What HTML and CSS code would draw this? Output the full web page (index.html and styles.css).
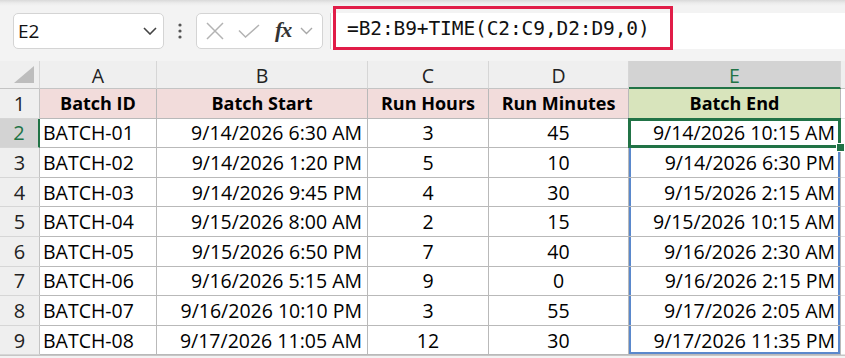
FILE: index.html
```html
<!DOCTYPE html>
<html lang="en">
<head>
  <meta charset="UTF-8">
  <meta name="viewport" content="width=device-width, initial-scale=1.0">
  <title>Batch End</title>
  <link rel="stylesheet" href="styles.css">
</head>
<body>
  <div class="toolbar">
    <div class="namebox">
      <span>E2</span>
      <svg class="chev" width="14" height="8" viewBox="0 0 14 8"><path d="M1 1 L7 7 L13 1" fill="none" stroke="#444" stroke-width="1.6"/></svg>
    </div>
    <div class="grip">
      <svg width="6" height="16" viewBox="0 0 6 16"><circle cx="3" cy="2" r="1.6" fill="#555"/><circle cx="3" cy="8" r="1.6" fill="#555"/><circle cx="3" cy="14" r="1.6" fill="#555"/></svg>
    </div>
    <div class="fxbox">
      <svg class="ico-x" width="18" height="18" viewBox="0 0 18 18"><path d="M1 1 L17 17 M17 1 L1 17" stroke="#b3b3b3" stroke-width="1.5"/></svg>
      <svg class="ico-ok" width="22" height="14" viewBox="0 0 22 14"><path d="M1 6.5 L7.5 13 L21 1" fill="none" stroke="#b3b3b3" stroke-width="1.5"/></svg>
      <span class="fx">fx</span>
      <svg class="chev-sm" width="13" height="8" viewBox="0 0 13 8"><path d="M1 1 L6.5 6.5 L12 1" fill="none" stroke="#a8a8a8" stroke-width="1.4"/></svg>
    </div>
    <div class="formula">
      <div class="formula-mark">=B2:B9+TIME(C2:C9,D2:D9,0)</div>
    </div>
  </div>

  <div class="sheet">
    <div class="h corner"><svg width="20" height="17" viewBox="0 0 20 17"><path d="M20 0 L20 17 L0 17 Z" fill="#bdbdbd"/></svg></div>
    <div class="h">A</div>
    <div class="h">B</div>
    <div class="h">C</div>
    <div class="h">D</div>
    <div class="h h-sel">E</div>
    <div class="h h-end"></div>

    <div class="r">1</div>
    <div class="c t pink">Batch ID</div>
    <div class="c t pink">Batch Start</div>
    <div class="c t pink">Run Hours</div>
    <div class="c t pink">Run Minutes</div>
    <div class="c t green">Batch End</div>
    <div class="c end"></div>

    <div class="r r-sel">2</div>
    <div class="c left">BATCH-01</div>
    <div class="c right">9/14/2026 6:30 AM</div>
    <div class="c">3</div>
    <div class="c">45</div>
    <div class="c right active">9/14/2026 10:15 AM<span class="handle"></span></div>
    <div class="c end"></div>

    <div class="r">3</div>
    <div class="c left">BATCH-02</div>
    <div class="c right">9/14/2026 1:20 PM</div>
    <div class="c">5</div>
    <div class="c">10</div>
    <div class="c right rng">9/14/2026 6:30 PM</div>
    <div class="c end"></div>

    <div class="r">4</div>
    <div class="c left">BATCH-03</div>
    <div class="c right">9/14/2026 9:45 PM</div>
    <div class="c">4</div>
    <div class="c">30</div>
    <div class="c right rng">9/15/2026 2:15 AM</div>
    <div class="c end"></div>

    <div class="r">5</div>
    <div class="c left">BATCH-04</div>
    <div class="c right">9/15/2026 8:00 AM</div>
    <div class="c">2</div>
    <div class="c">15</div>
    <div class="c right rng">9/15/2026 10:15 AM</div>
    <div class="c end"></div>

    <div class="r">6</div>
    <div class="c left">BATCH-05</div>
    <div class="c right">9/15/2026 6:50 PM</div>
    <div class="c">7</div>
    <div class="c">40</div>
    <div class="c right rng">9/16/2026 2:30 AM</div>
    <div class="c end"></div>

    <div class="r">7</div>
    <div class="c left">BATCH-06</div>
    <div class="c right">9/16/2026 5:15 AM</div>
    <div class="c">9</div>
    <div class="c">0</div>
    <div class="c right rng">9/16/2026 2:15 PM</div>
    <div class="c end"></div>

    <div class="r">8</div>
    <div class="c left">BATCH-07</div>
    <div class="c right">9/16/2026 10:10 PM</div>
    <div class="c">3</div>
    <div class="c">55</div>
    <div class="c right rng">9/17/2026 2:05 AM</div>
    <div class="c end"></div>

    <div class="r">9</div>
    <div class="c left">BATCH-08</div>
    <div class="c right">9/17/2026 11:05 AM</div>
    <div class="c">12</div>
    <div class="c">30</div>
    <div class="c right rng rng-last">9/17/2026 11:35 PM</div>
    <div class="c end"></div>
  </div>
</body>
</html>
```

FILE: styles.css
```css
body {
  margin: 0;
  padding: 0;
  background-color: #f3f3f3;
  font-family: 'Open Sans', sans-serif;
  color: #000;
  overflow: hidden;
}
.toolbar {
  height: 61px;
  box-sizing: border-box;
  padding-top: 13px;
  display: flex;
  align-items: flex-start;
  background: linear-gradient(#d9d9d9, #ececec 3px, #f3f3f3 6px);
}
.namebox {
  margin-left: 13px;
  width: 151px;
  height: 36px;
  box-sizing: border-box;
  background-color: #fff;
  border: 1px solid #d4d4d4;
  border-radius: 5px;
  display: flex;
  align-items: center;
  justify-content: space-between;
  padding: 0 6px 0 4px;
  font-size: 19px;
  color: #111;
}
.grip {
  width: 32px;
  height: 36px;
  display: flex;
  align-items: center;
  justify-content: center;
}
.fxbox {
  width: 127px;
  height: 36px;
  box-sizing: border-box;
  background-color: #fff;
  border: 1px solid #d4d4d4;
  border-radius: 5px;
  display: flex;
  align-items: center;
  padding-left: 9px;
}
.ico-x {
  margin-right: 14px;
}
.ico-ok {
  margin-right: 15px;
}
.fx {
  font-family: 'Liberation Serif', serif;
  font-style: italic;
  font-weight: bold;
  font-size: 22px;
  color: #333;
  margin-right: 9px;
  margin-top: -3px;
  letter-spacing: -1px;
}
.formula {
  margin-left: 7px;
  flex: 1;
  height: 36px;
  background-color: #fff;
  border-left: 1px solid #d4d4d4;
}
.formula-mark {
  margin-left: 2px;
  margin-top: -7px;
  width: 340px;
  height: 44px;
  box-sizing: border-box;
  border: 3px solid #e11d48;
  padding-left: 11px;
  display: flex;
  align-items: center;
  font-family: 'DejaVu Sans Mono', monospace;
  font-size: 19.5px;
  color: #111;
  letter-spacing: -0.1px;
}
.sheet {
  display: grid;
  grid-template-columns: 40px 117px 211px 121px 140px 212px 1fr;
  grid-template-rows: 28px repeat(9, 29.6px);
  background-color: #fff;
  font-size: 19.5px;
  border-bottom: 1px solid #c6c6c6;
}
.sheet > div {
  box-sizing: border-box;
  display: flex;
  align-items: center;
  justify-content: center;
  white-space: nowrap;
}
.h {
  background-color: #efefef;
  border-right: 1px solid #d6d6d6;
  border-bottom: 1px solid #c4c4c4;
  color: #222;
  padding-top: 2px;
}
.corner {
  justify-content: flex-end !important;
  align-items: flex-end !important;
  padding: 0 5px 5px 0;
}
.h-sel {
  background-color: #d3d3d3;
  color: #217346;
  border-bottom: 2px solid #217346;
}
.h-end {
  border-right: none;
}
.r {
  background-color: #efefef;
  border-right: 1px solid #c4c4c4;
  border-bottom: 1px solid #d6d6d6;
  color: #222;
  font-size: 20px;
}
.r-sel {
  background-color: #d3d3d3;
  color: #217346;
  border-right: 2px solid #217346;
}
.c {
  border-right: 1px solid #b9b9b9;
  border-bottom: 1px solid #b9b9b9;
}
.t {
  font-weight: bold;
  font-size: 18px;
}
.pink {
  background-color: #f2dcdb;
}
.green {
  background-color: #d8e4bc;
}
.left {
  justify-content: flex-start !important;
  padding-left: 3px;
}
.right {
  justify-content: flex-end !important;
  padding-right: 5px;
}
.end {
  border-right: none;
  border-bottom-color: #e2e2e2;
}
.active {
  position: relative;
  box-shadow: inset 0 0 0 2px #217346;
}
.active::after {
  content: "";
  position: absolute;
  left: -1px;
  top: -1px;
  right: -1px;
  bottom: -1px;
  border: 2px solid #217346;
  pointer-events: none;
}
.handle {
  position: absolute;
  right: -5px;
  bottom: -5px;
  width: 7px;
  height: 7px;
  background-color: #217346;
  border: 1px solid #fff;
  z-index: 2;
}
.rng {
  box-shadow: inset 2px 0 0 #5a88cc, inset -2px 0 0 #5a88cc;
}
.rng-last {
  box-shadow: inset 2px 0 0 #5a88cc, inset -2px 0 0 #5a88cc, inset 0 -2px 0 #5a88cc;
}
```
